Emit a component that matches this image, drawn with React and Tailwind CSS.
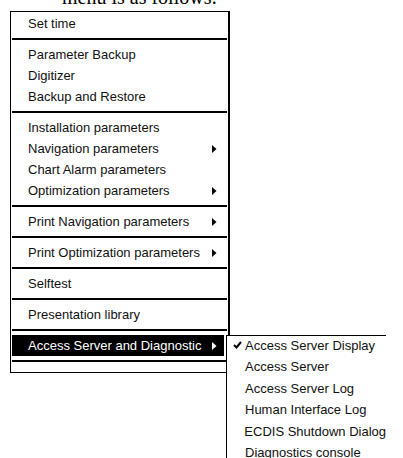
import React from "react";

const Arrow = ({ white }) => (
  <svg width="5" height="8" viewBox="0 0 5 8" className="shrink-0">
    <path d="M0 0 L4.5 4 L0 8 Z" fill={white ? "#fff" : "#000"} />
  </svg>
);

const Item = ({ label, sub }) => (
  <div className="h-[21px] flex items-center pl-[17px] pr-[11px] text-[#111]">
    <span className="flex-1 whitespace-nowrap">{label}</span>
    {sub && <Arrow />}
  </div>
);

const Sep = () => <div className="h-[2px] bg-black mx-px my-1" />;

export default function App() {
  const subItems = [
    "Access Server Display",
    "Access Server",
    "Access Server Log",
    "Human Interface Log",
    "ECDIS Shutdown Dialog",
    "Diagnostics console",
  ];
  return (
    <div className="w-[403px] h-[458px] overflow-hidden bg-white">
      <div className="-mt-[13px] pl-[62px] text-[20px] leading-[20px] text-black whitespace-nowrap" style={{ fontFamily: '"Liberation Serif", serif' }}>
        menu is as follows:
      </div>
      <div className="mt-[4px] ml-[10px] relative w-[220px] text-[13px]" style={{ fontFamily: '"Liberation Sans", Arial, sans-serif' }}>
        <div className="border-l border-t border-b border-black border-r-2 pt-px pb-[6px]">
          <Item label="Set time" />
          <Sep />
          <Item label="Parameter Backup" />
          <Item label="Digitizer" />
          <Item label="Backup and Restore" />
          <Sep />
          <Item label="Installation parameters" />
          <Item label="Navigation parameters" sub />
          <Item label="Chart Alarm parameters" />
          <Item label="Optimization parameters" sub />
          <Sep />
          <Item label="Print Navigation parameters" sub />
          <Sep />
          <Item label="Print Optimization parameters" sub />
          <Sep />
          <Item label="Selftest" />
          <Sep />
          <Item label="Presentation library" />
          <Sep />
          <div className="h-[21px] flex items-center bg-black text-white ml-px mr-[4px] pl-[16px] pr-[7px]">
            <span className="flex-1 whitespace-nowrap">Access Server and Diagnostic</span>
            <Arrow white />
          </div>
          <Sep />
        </div>
        <div className="absolute left-[216px] top-[324px] w-[160px] h-[140px] bg-white border-l border-t border-black">
          {subItems.map((s, i) => (
            <div key={s} className="h-[21.5px] pb-[3px] flex items-center text-[#111] whitespace-nowrap">
              <div className="w-[18px] flex justify-center pl-[2px]">
                {i === 0 && (
                  <svg width="9" height="8" viewBox="0 0 9 8">
                    <path d="M1 4 L3.5 6.5 L8 1" stroke="#000" strokeWidth="2" fill="none" />
                  </svg>
                )}
              </div>
              <span>{s}</span>
            </div>
          ))}
        </div>
      </div>
    </div>
  );
}
